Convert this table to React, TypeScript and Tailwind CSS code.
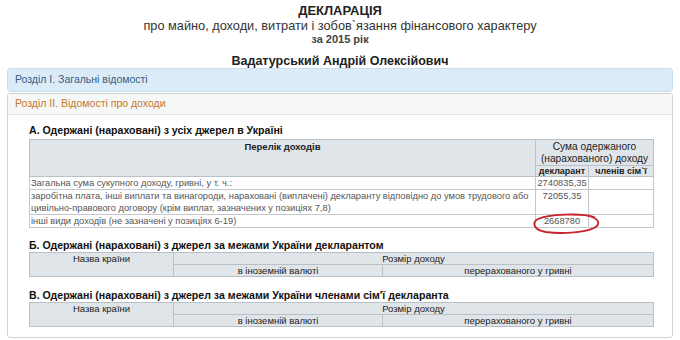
export default function App() {
  const th = 'border border-[#b9c0c6] bg-[#e0e5e9] text-[#222] p-0';
  const td = 'border border-[#c4c8cc] px-[1px] py-0 align-top';
  return (
    <div className="w-[680px] h-[340px] bg-white overflow-hidden text-[#333]" style={{ fontFamily: '"Liberation Sans", Arial, sans-serif' }}>
      <div className="text-center pt-[3px]">
        <div className="text-[13px] font-bold leading-[15px] text-[#222]">ДЕКЛАРАЦІЯ</div>
        <div className="text-[12.75px] leading-[14px] mt-px text-[#333]">про майно, доходи, витрати і зобов`язання фінансового характеру</div>
        <div className="text-[11px] font-bold leading-[13px] text-[#444]">за 2015 рік</div>
        <div className="text-[12.5px] font-bold leading-[13px] mt-[9px] text-[#222]">Вадатурський Андрій Олексійович</div>
      </div>

      <div className="mx-[7px] h-[24px] rounded-[3px] border border-[#c6dff0] bg-[#dcebf8] flex items-center pl-[7px] text-[10.5px] text-[#35607f]">
        Розділ І. Загальні відомості
      </div>

      <div className="mx-[7px] mt-px rounded-[3px] border border-[#cfd3d6] bg-white h-[245px]">
        <div className="h-[21px] bg-[#f6f7f7] border-b border-[#e4e6e7] flex items-center pl-[7px] text-[10.5px] text-[#c3772f]">
          Розділ ІІ. Відомості про доходи
        </div>

        <div className="pl-[21px] pr-[20px]">
          <div className="mt-[9px] text-[10.6px] font-bold leading-[13px] text-[#111]">А. Одержані (нараховані) з усіх джерел в Україні</div>
          <table className="mt-[2px] w-[624px] border-collapse text-[9.3px] leading-[12px] text-[#555] table-fixed">
            <colgroup>
              <col className="w-[506px]" />
              <col className="w-[53px]" />
              <col className="w-[65px]" />
            </colgroup>
            <thead>
              <tr className="h-[24px]">
                <th rowSpan={2} className={`${th} align-top text-[9.5px] font-bold pt-[1px]`}>Перелік доходів</th>
                <th colSpan={2} className={`${th} text-[10.2px] font-normal leading-[12px] align-top pt-px`}>Сума одержаного (нарахованого) доходу</th>
              </tr>
              <tr className="h-[10px]">
                <th className={`${th} text-[9px] leading-[10px] font-bold`}>декларант</th>
                <th className={`${th} text-[9px] leading-[10px] font-bold`}>членів сім`ї</th>
              </tr>
            </thead>
            <tbody>
              <tr className="h-[12px]">
                <td className={td}>Загальна сума сукупного доходу, гривні, у т. ч.:</td>
                <td className={`${td} text-center`}>2740835,35</td>
                <td className={td}></td>
              </tr>
              <tr className="h-[25px]">
                <td className={td}>заробітна плата, інші виплати та винагороди, нараховані (виплачені) декларанту відповідно до умов трудового або цивільно-правового договору (крім виплат, зазначених у позиціях 7,8)</td>
                <td className={`${td} text-center`}>72055,35</td>
                <td className={td}></td>
              </tr>
              <tr className="h-[12px]">
                <td className={td}>інші види доходів (не зазначені у позиціях 6-19)</td>
                <td className={`${td} text-center relative`}>
                  2668780
                  <svg className="absolute left-[-4px] top-[-1px] overflow-visible" width="70" height="20" viewBox="0 0 70 20">
                    <path d="M62 3 C50 -1 16 0 6 5 C-1 9 2 16 14 18 C28 20 52 19 62 14 C68 11 68 6 60 3 L57 2" fill="none" stroke="#c8232c" strokeWidth="1.8" strokeLinecap="round" />
                  </svg>
                </td>
                <td className={td}></td>
              </tr>
            </tbody>
          </table>

          <SubTable title="Б. Одержані (нараховані) з джерел за межами України декларантом" mt="mt-[11px]" />
          <SubTable title="В. Одержані (нараховані) з джерел за межами України членами сім'ї декларанта" mt="mt-[12px]" />
        </div>
      </div>
    </div>
  );
}

function SubTable({ title, mt }: { title: string; mt: string }) {
  const th = 'border border-[#b9c0c6] bg-[#e0e5e9] font-normal text-[#222] text-[9.5px] leading-[11px] p-0';
  return (
    <>
      <div className={`${mt} text-[10.6px] font-bold leading-[13px] text-[#111]`}>{title}</div>
      <table className="w-[624px] border-collapse table-fixed">
        <colgroup>
          <col className="w-[144px]" />
          <col className="w-[209px]" />
          <col className="w-[271px]" />
        </colgroup>
        <thead>
          <tr className="h-[12px]">
            <th rowSpan={2} className={`${th} align-top`}>Назва країни</th>
            <th colSpan={2} className={th}>Розмір доходу</th>
          </tr>
          <tr className="h-[12px]">
            <th className={th}>в іноземній валюті</th>
            <th className={th}>перерахованого у гривні</th>
          </tr>
        </thead>
      </table>
    </>
  );
}
